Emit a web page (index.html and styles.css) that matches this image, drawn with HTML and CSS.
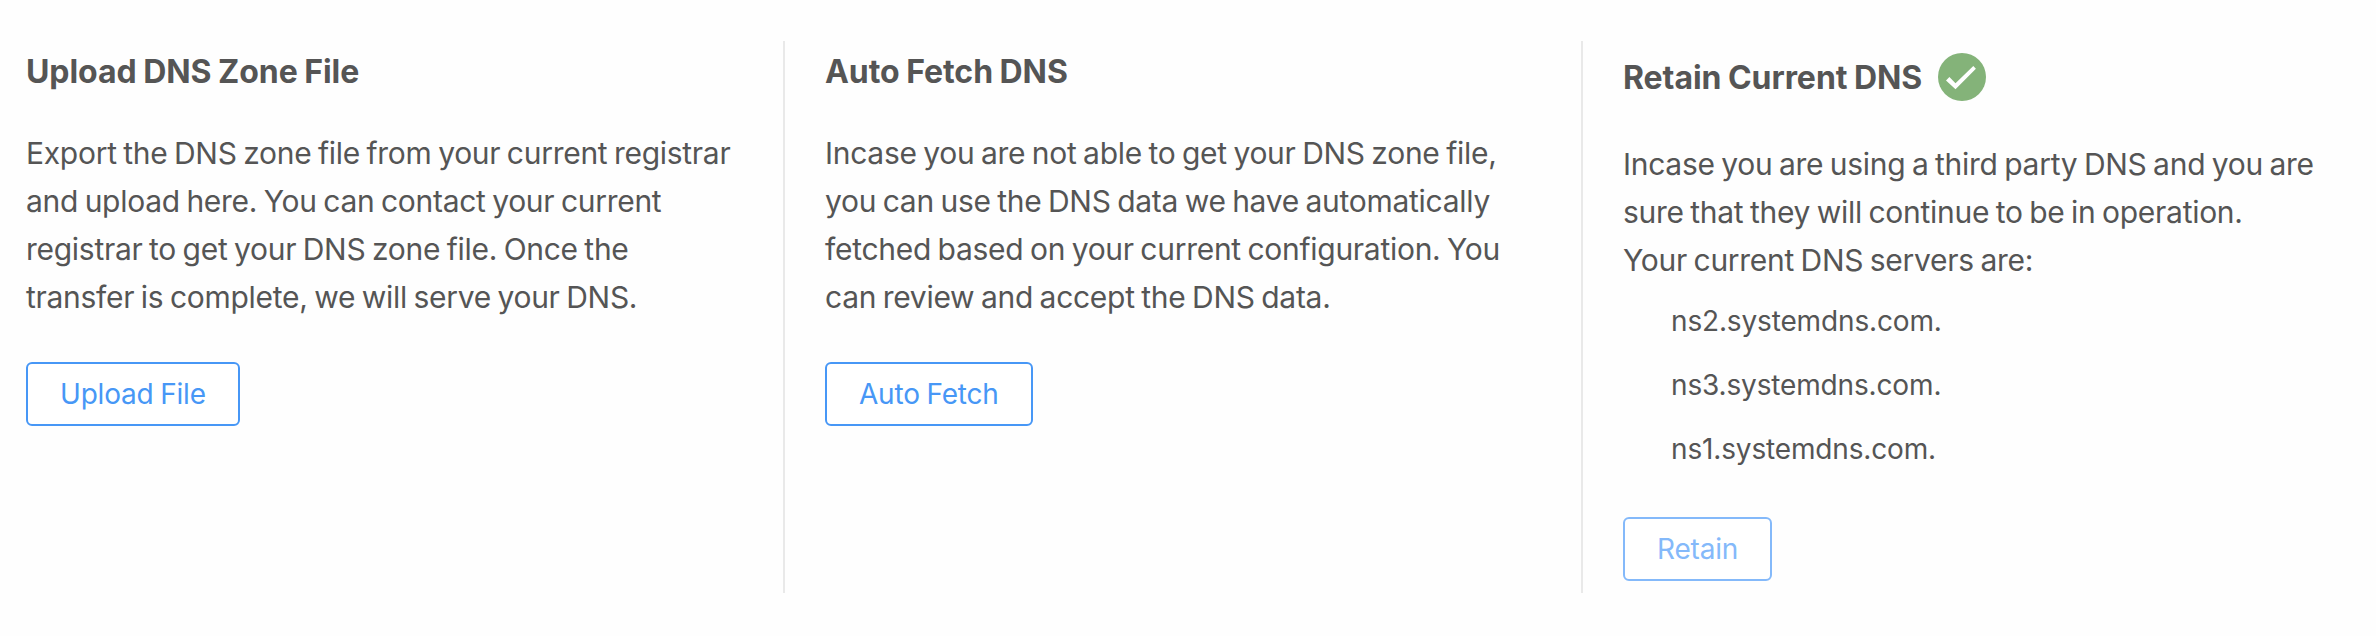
FILE: index.html
```html
<!DOCTYPE html>
<html lang="en">
<head>
    <meta charset="UTF-8">
    <meta name="viewport" content="width=device-width, initial-scale=1.0">
    <title>DNS Settings</title>
    <link rel="stylesheet" href="styles.css">
</head>
<body>
    <div class="container">
        <div class="option">
            <h2>Upload DNS Zone File</h2>
            <p>
                Export the DNS zone file from your current registrar<br>
                and upload here. You can contact your current<br>
                registrar to get your DNS zone file. Once the<br>
                transfer is complete, we will serve your DNS.
            </p>
            <button type="button">Upload File</button>
        </div>
        <div class="option">
            <h2>Auto Fetch DNS</h2>
            <p>
                Incase you are not able to get your DNS zone file,<br>
                you can use the DNS data we have automatically<br>
                fetched based on your current configuration. You<br>
                can review and accept the DNS data.
            </p>
            <button type="button">Auto Fetch</button>
        </div>
        <div class="option selected">
            <h2>
                Retain Current DNS
                <svg class="check" viewBox="0 0 48 48">
                    <circle cx="24" cy="24" r="24" fill="#84b379"/>
                    <path d="M8 27.5l3.4-3.4 6.1 6.1L35.3 13l2.6 2.7-20.4 20.6z" fill="#fff"/>
                </svg>
            </h2>
            <p>
                Incase you are using a third party DNS and you are<br>
                sure that they will continue to be in operation.<br>
                Your current DNS servers are:
            </p>
            <ul>
                <li>ns2.systemdns.com.</li>
                <li>ns3.systemdns.com.</li>
                <li>ns1.systemdns.com.</li>
            </ul>
            <button type="button" disabled>Retain</button>
        </div>
    </div>
</body>
</html>
```
FILE: styles.css
```css
body {
    font-family: Inter, Roboto, sans-serif;
    background-color: #fefefe;
    color: #555;
    margin: 0;
}
.container {
    display: grid;
    grid-template-columns: 785px 798px 793px;
    padding-top: 41px;
}
.option {
    box-sizing: border-box;
    height: 552px;
    padding: 7px 0 0 40px;
    border-right: 2px solid #e9e9e9;
}
.option:first-child {
    padding-left: 26px;
}
.option:last-child {
    border-right: none;
}
h2 {
    display: flex;
    align-items: center;
    gap: 16px;
    height: 48px;
    margin: 0 0 33px;
    font-size: 32px;
    font-weight: 700;
    letter-spacing: -0.05px;
    word-spacing: -1px;
    line-height: 48px;
    white-space: nowrap;
}
.selected h2 {
    height: 60px;
    margin-bottom: 32px;
}
.check {
    width: 48px;
    height: 48px;
    margin-bottom: 2px;
}
p {
    margin: 0 0 41px;
    font-size: 30px;
    letter-spacing: -0.28px;
    word-spacing: -1.6px;
    line-height: 48px;
    white-space: nowrap;
}
.selected p {
    margin-bottom: 5px;
}
ul {
    list-style: none;
    margin: 0 0 36px;
    padding: 0 0 0 48px;
}
li {
    font-size: 28px;
    letter-spacing: -0.15px;
    line-height: 64px;
}
button {
    display: block;
    height: 64px;
    padding: 0 32px;
    font-family: inherit;
    font-size: 28px;
    letter-spacing: -0.2px;
    word-spacing: -1px;
    background-color: #fff;
    color: #4797f6;
    border: 2px solid #4797f6;
    border-radius: 6px;
    cursor: pointer;
}
button:disabled {
    color: #84b9fa;
    border-color: #84b9fa;
    cursor: default;
}
```
